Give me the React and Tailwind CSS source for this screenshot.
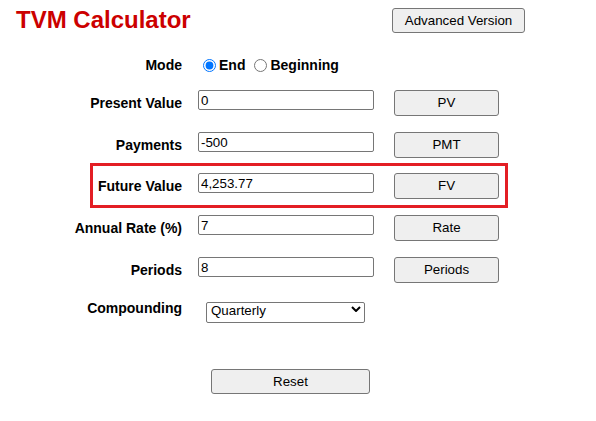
import { useState } from "react";

const font = { fontFamily: '"Liberation Sans", Arial, sans-serif' };

function Field({ label, value, button, labelW = "w-[182px]" }) {
  return (
    <div className="flex items-start">
      <div className={`${labelW} h-[26px] flex items-center justify-end text-[14px] font-bold text-black`}>
        {label}
      </div>
      <input
        className="ml-4 w-[176px] h-[20px] border border-[#767676] rounded-[2px] px-[2px] py-px text-[13.33px] text-black bg-white outline-none"
        defaultValue={value}
      />
      <button className="ml-5 w-[105px] h-[26px] border border-[#767676] rounded-[3px] bg-[#efefef] text-[13.33px] text-black">
        {button}
      </button>
    </div>
  );
}

export default function App() {
  const [mode, setMode] = useState("end");

  return (
    <div className="w-[596px] h-[421px] bg-white text-black" style={font}>
      <div className="flex items-start h-[40px]">
        <h1 className="ml-4 pt-[6px] w-[376px] text-[24px] leading-[28px] font-bold text-[#cc0000]">
          TVM Calculator
        </h1>
        <button className="mt-2 w-[133px] h-[25px] border border-[#767676] rounded-[3px] bg-[#efefef] text-[13.33px]">
          Advanced Version
        </button>
      </div>

      <div className="flex items-center h-[24px] mt-[13px]">
        <div className="w-[182px] text-right text-[14px] font-bold">Mode</div>
        <label className="ml-4 flex items-center text-[14px] font-bold">
          <input
            type="radio"
            name="mode"
            checked={mode === "end"}
            onChange={() => setMode("end")}
            className="ml-[5px] mr-[3px] w-[13px] h-[13px] accent-[#0075ff]"
          />
          End
        </label>
        <label className="ml-[4px] flex items-center text-[14px] font-bold">
          <input
            type="radio"
            name="mode"
            checked={mode === "begin"}
            onChange={() => setMode("begin")}
            className="ml-[5px] mr-[3px] w-[13px] h-[13px] accent-[#0075ff]"
          />
          Beginning
        </label>
      </div>

      <div className="mt-[13px]">
        <Field label="Present Value" value="0" button="PV" />
      </div>
      <div className="mt-4">
        <Field label="Payments" value="-500" button="PMT" />
      </div>
      <div className="mt-[5px] ml-[90px] w-[418px] border-[3px] border-[#e31e24] pt-[7px] pb-[6px]">
        <Field label="Future Value" value="4,253.77" button="FV" labelW="w-[89px]" />
      </div>
      <div className="mt-[7px]">
        <Field label="Annual Rate (%)" value="7" button="Rate" />
      </div>
      <div className="mt-4">
        <Field label="Periods" value="8" button="Periods" />
      </div>

      <div className="flex items-center mt-[15px]">
        <div className="w-[182px] text-right text-[14px] font-bold">Compounding</div>
        <div className="relative ml-6 w-[159px] h-[21px]">
          <select
            defaultValue="Quarterly"
            className="appearance-none w-full h-full border border-[#767676] rounded-[2px] bg-white pl-1 pt-0 pb-[3px] leading-[15px] text-[13.33px] text-black outline-none"
          >
            <option>Annually</option>
            <option>Semi-Annually</option>
            <option>Quarterly</option>
            <option>Monthly</option>
            <option>Daily</option>
          </select>
          <svg
            className="absolute right-[4px] top-[8px] pointer-events-none"
            width="10"
            height="6"
            viewBox="0 0 10 6"
          >
            <path d="M1 1 L5 5 L9 1" fill="none" stroke="#000" strokeWidth="2" />
          </svg>
        </div>
      </div>

      <button className="mt-[50px] ml-[211px] w-[159px] h-[25px] border border-[#767676] rounded-[3px] bg-[#efefef] text-[13.33px]">
        Reset
      </button>
    </div>
  );
}
